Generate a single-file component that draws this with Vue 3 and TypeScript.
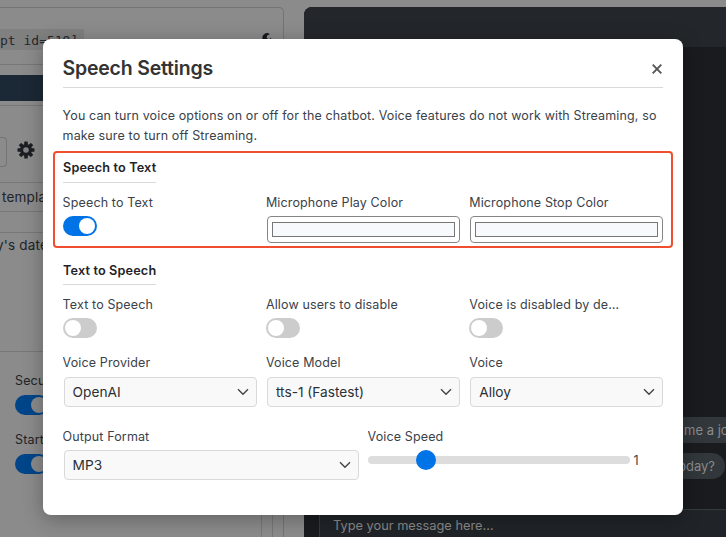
<script setup lang="ts">
import { ref } from 'vue'

interface SelectField {
  label: string
  value: string
}

const micFields: string[] = ['Microphone Play Color', 'Microphone Stop Color']
const switches: string[] = ['Text to Speech', 'Allow users to disable', 'Voice is disabled by default']
const selects: SelectField[] = [
  { label: 'Voice Provider', value: 'OpenAI' },
  { label: 'Voice Model', value: 'tts-1 (Fastest)' },
  { label: 'Voice', value: 'Alloy' },
]
const speechToText = ref(true)
const speed = ref(1)
</script>

<template>
  <div class="page">
    <div class="admin">
      <div class="card">
        <div class="code-row"><code>pt id=519]</code>
          <svg class="wrench" viewBox="0 0 12 12"><path d="M8.8 1.2A4.6 4.6 0 0 0 1.5 6v6h8.6V4.6L8.2 6.4 5.7 4.9 6 2.4z" fill="#17191c" /></svg>
        </div>
        <div class="banner-row"><div class="banner"></div></div>
        <div class="gear-row">
          <div class="stub"></div>
          <svg class="gear" viewBox="0 0 18 18">
            <g fill="#1c1e21">
              <rect v-for="a in [0, 45, 90, 135]" :key="a" x="7.2" y="0.5" width="3.6" height="17" rx="0.6" :transform="`rotate(${a} 9 9)`" />
              <circle cx="9" cy="9" r="6" />
            </g>
            <circle cx="9" cy="9" r="2.8" fill="#848484" />
          </svg>
        </div>
        <div class="text-row template">templates</div>
        <div class="spacer"></div>
        <div class="text-row date">y's date</div>
        <div class="options">
          <div class="option"><span>Security</span><i class="toggle on dim"></i></div>
          <div class="option"><span>Starters</span><i class="toggle on dim"></i></div>
          <div class="rails"><i></i><i></i></div>
        </div>
      </div>
    </div>
    <div class="chat">
      <div class="chat-head"></div>
      <div class="chat-body">
        <span class="bubble first">Tell me a joke</span>
        <span class="bubble">How are you today?</span>
      </div>
      <div class="chat-foot">Type your message here...</div>
    </div>

    <div class="modal">
      <header>
        <h1>Speech Settings</h1>
        <svg class="close" viewBox="0 0 12 12"><path d="M1.7 1.7l8.6 8.6M10.3 1.7l-8.6 8.6" /></svg>
      </header>
      <p class="intro">You can turn voice options on or off for the chatbot. Voice features do not work with Streaming, so make sure to turn off Streaming.</p>

      <section class="highlight">
        <h2>Speech to Text</h2>
        <div class="grid">
          <div class="field">
            <label>Speech to Text</label>
            <i class="toggle" :class="{ on: speechToText }"></i>
          </div>
          <div v-for="m in micFields" :key="m" class="field">
            <label>{{ m }}</label>
            <div class="color"><div class="swatch"></div></div>
          </div>
        </div>
      </section>

      <section class="tts">
        <h2>Text to Speech</h2>
        <div class="grid switches">
          <div v-for="s in switches" :key="s" class="field">
            <label>{{ s }}</label>
            <i class="toggle"></i>
          </div>
        </div>
        <div class="grid pickers">
          <div v-for="s in selects" :key="s.label" class="field">
            <label>{{ s.label }}</label>
            <div class="select"><span>{{ s.value }}</span>
              <svg viewBox="0 0 12 8"><path d="M1 1.3l5 5 5-5" /></svg>
            </div>
          </div>
        </div>
        <div class="grid two">
          <div class="field wide">
            <label>Output Format</label>
            <div class="select"><span>MP3</span>
              <svg viewBox="0 0 12 8"><path d="M1 1.3l5 5 5-5" /></svg>
            </div>
          </div>
          <div class="field">
            <label>Voice Speed</label>
            <div class="slider">
              <div class="track"><div class="thumb"></div></div>
              <span>{{ speed }}</span>
            </div>
          </div>
        </div>
      </section>
    </div>
  </div>
</template>

<style>
body { margin: 0; overflow: hidden; }
</style>

<style scoped>
* { box-sizing: border-box; }
.page {
  position: relative; display: flex; width: 726px; height: 537px; overflow: hidden;
  background: #8b8b8b; font-family: Inter, sans-serif; font-size: 12.5px; color: #3a424a;
}
.admin { width: 304px; padding-top: 7px; flex: none; }
.card {
  width: 284px; height: 530px; border: solid #747474; border-width: 1px 1px 0 0;
  border-radius: 0 5px 0 0; color: #202327; display: flex; flex-direction: column;
}
.code-row { height: 57px; padding-top: 21px; border-bottom: 1px solid #777; display: flex; justify-content: space-between; flex: none; }
.code-row code {
  width: 84px; height: 21px; background: #808080; font: 13px/23px "DejaVu Sans Mono", monospace;
  padding-left: 0; color: #24272b; white-space: nowrap;
}
.wrench { width: 12px; height: 12px; margin: 4px 10px 0 0; }
.banner-row { height: 41px; padding-top: 10px; border-bottom: 1px solid #777; flex: none; }
.banner { height: 26px; background: #1b2835; }
.gear-row { display: flex; height: 77px; padding-top: 31px; border-bottom: 1px solid #777; flex: none; }
.stub { width: 7px; height: 30px; border: solid #747474; border-width: 1px 1px 1px 0; border-radius: 0 4px 4px 0; }
.gear { width: 18px; height: 18px; margin: 4px 0 0 10px; }
.text-row { font-size: 13.5px; letter-spacing: .2px; flex: none; white-space: nowrap; }
.template { height: 29px; line-height: 29px; padding-left: 2px; border-bottom: 1px solid #777; }
.spacer { height: 21px; border-bottom: 1px solid #777; flex: none; }
.date { height: 119px; line-height: 25px; border-bottom: 1px solid #777; text-indent: -4px; }
.options { flex: 1; position: relative; padding: 19px 0 0 15px; }
.option { height: 58.5px; line-height: 20px; display: flex; flex-direction: column; gap: 4px; letter-spacing: .15px; }
.rails { position: absolute; right: 0; top: 0; bottom: 0; width: 22px; display: flex; gap: 10px; }
.rails i { width: 1px; background: #777; }

.chat { flex: 1; margin-top: 7px; border-radius: 8px 0 0 0; background: #1a1b1f; overflow: hidden; display: flex; flex-direction: column; color: #8a8a8a; }
.chat-head { height: 40px; background: #23272b; flex: none; }
.chat-body { flex: 1; display: flex; flex-direction: column; align-items: flex-end; justify-content: flex-end; gap: 10px; padding-bottom: 30px; }
.bubble { height: 26px; line-height: 27px; border-radius: 13px; background: #31373b; padding: 0 10px; margin-right: 1px; white-space: nowrap; font-size: 13px; }
.bubble.first { margin-right: -27px; }
.chat-foot { height: 28px; background: #202428; border: solid #363a3d; border-width: 1px 0 0 1px; margin-left: 15px; padding-left: 13px; line-height: 31px; font-size: 12.8px; letter-spacing: 0; flex: none; }

.modal {
  position: absolute; left: 43px; top: 39px; width: 640px; height: 476px; padding: 0 20px;
  background: #fff; border-radius: 8px; box-shadow: 0 4px 20px rgba(0, 0, 0, .3);
}
header { height: 49px; border-bottom: 1px solid #d9d9d9; display: flex; justify-content: space-between; }
h1 { margin: 0 0 0 -.5px; font-size: 19.5px; line-height: 24px; padding-top: 17px; font-weight: 600; color: #333; letter-spacing: -.2px; }
.close { width: 12px; height: 12px; margin: 24px .5px 0 0; stroke: #555; stroke-width: 1.9; fill: none; }
.intro { margin: 18px 0 0 -.4px; line-height: 20px; height: 40px; letter-spacing: .13px; width: 600px; }
.highlight { margin: 5px -10px 0; height: 97px; padding: 4px 8px 0; border: 2px solid #f04e2e; border-radius: 4px; }
h2 { margin: 0; width: fit-content; font-size: 12.7px; line-height: 22px; height: 26px; font-weight: 600; color: #1f2328; border-bottom: 1px solid #d9d9d9; letter-spacing: .14px; }
.tts h2 { line-height: 24px; }
.grid { display: grid; grid-template-columns: repeat(3, minmax(0, 1fr)); column-gap: 10px; margin: 9px .4px 0 -.4px; }
.field { min-width: 0; }
label { display: block; height: 20px; line-height: 22px; letter-spacing: .13px; overflow: hidden; white-space: nowrap; text-overflow: ellipsis; margin-bottom: 4px; }
.switches label { width: 151px; }
.toggle { display: block; width: 34px; height: 20px; border-radius: 10px; background: #ccc; padding: 2px; flex: none; }
.toggle::after { content: ""; display: block; width: 16px; height: 16px; border-radius: 50%; background: #fff; }
.toggle.on { background: #0073e6; }
.toggle.on::after { margin-left: 14px; }
.toggle.dim { background: #00458a; }
.toggle.dim::after { background: #8b8b8b; }
.color { height: 27px; margin: 0 -.7px 0 1px; border: 1px solid #858585; border-radius: 4px; padding: 5px 4px; }
.swatch { height: 15px; border: 1px solid #777; background: #f8f9fc; }
.tts { padding-top: 11px; }
.pickers { margin-top: 14px; }
.pickers label { margin-bottom: 5px; }
.select { height: 30px; margin: 0 -.7px 0 1px; border: 1px solid #d9d9d9; border-radius: 4px; background: #f9f9f9; padding: 0 7px 1px 8px; display: flex; align-items: center; justify-content: space-between; font-size: 13.7px; color: #2a3036; }
.select svg { width: 12px; height: 8px; fill: none; stroke: #444; stroke-width: 1.4; }
.two { grid-template-columns: 1fr 1fr; margin-top: 19px; }
.two label { margin-bottom: 4px; }
.wide .select { margin-right: -1.4px; }
.slider { display: flex; align-items: center; height: 20px; }
.track { width: 262px; height: 8px; border-radius: 4px; background: #ddd; padding-left: 48px; display: flex; align-items: center; margin-right: 4px; }
.thumb { width: 20px; height: 20px; border-radius: 50%; background: #0073e6; }
</style>
